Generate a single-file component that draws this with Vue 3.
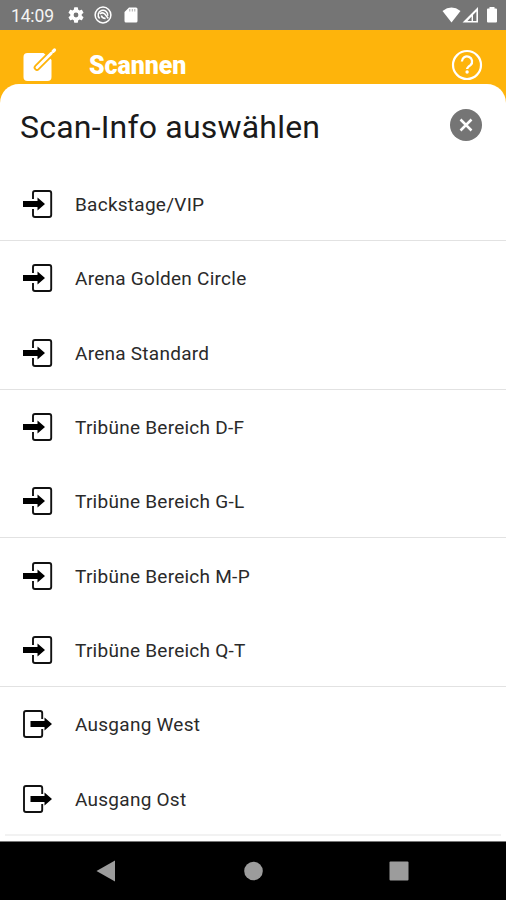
<script setup>
const entries = [
  { label: 'Backstage/VIP', line: true },
  { label: 'Arena Golden Circle' },
  { label: 'Arena Standard', line: true },
  { label: 'Tribüne Bereich D-F' },
  { label: 'Tribüne Bereich G-L', line: true },
  { label: 'Tribüne Bereich M-P' },
  { label: 'Tribüne Bereich Q-T', line: true },
  { label: 'Ausgang West', exit: true },
  { label: 'Ausgang Ost', exit: true },
]
</script>

<template>
  <div class="screen">
    <div class="status">
      <span class="time">14:09</span>
      <svg class="s-gear" width="16" height="16" viewBox="2 2 20 20"><path fill="#fff" fill-rule="evenodd" d="M19.14 12.94c.04-.3.06-.61.06-.94s-.02-.64-.07-.94l2.03-1.58a.49.49 0 0 0 .12-.61l-1.92-3.32a.49.49 0 0 0-.59-.22l-2.39.96a7 7 0 0 0-1.62-.94l-.36-2.54a.48.48 0 0 0-.48-.41h-3.84a.48.48 0 0 0-.47.41l-.36 2.54c-.59.24-1.13.57-1.62.94l-2.39-.96a.49.49 0 0 0-.59.22L2.74 8.87a.48.48 0 0 0 .12.61l2.03 1.58a6 6 0 0 0 0 1.88l-2.03 1.58a.49.49 0 0 0-.12.61l1.92 3.32c.12.22.37.29.59.22l2.39-.96c.5.38 1.03.7 1.62.94l.36 2.54c.05.24.24.41.48.41h3.84c.24 0 .44-.17.47-.41l.36-2.54a7 7 0 0 0 1.62-.94l2.39.96c.22.08.47 0 .59-.22l1.92-3.32a.48.48 0 0 0-.12-.61zM12 15a3 3 0 1 1 0-6 3 3 0 0 1 0 6z"/></svg>
      <svg class="s-round" width="18" height="18" viewBox="0 0 18 18" fill="none" stroke="#fff"><circle cx="9" cy="9" r="7.900" stroke-width="1.500"/><path d="M5.600 12.500A4.800 4.800 0 1 1 13.700 9.800" stroke-width="1.500"/><path d="M5.800 7.800q3-2 5 .3l3.500 4.400M7.300 9.500q.6 2.800 4.300 3" stroke-width="1.500"/></svg>
      <svg class="s-sd" width="14" height="16" viewBox="0 0 14 16"><path fill="#fff" d="M5 .5h7A1.500 1.500 0 0 1 13.500 2v12a1.500 1.500 0 0 1-1.500 1.500H2A1.500 1.500 0 0 1 .5 14V5z"/><path stroke="#aaa" stroke-width="1" d="M5.800 2v2.500M8.300 2v2.500M10.800 2v2.500"/></svg>
      <span class="grow"></span>
      <svg class="s-net" width="56" height="18" viewBox="0 0 56 18"><path fill="#fff" d="M.5 5Q9.500-1.800 18.500 5L9.500 16.500z"/><path fill="#fff" fill-rule="evenodd" d="M36 1v15.500H20.500zM34.400 5.500v9.400H31V9zM29.600 10.500v4.400H25.500z"/><path fill="#fff" d="M47.500 1h5v1.600H54q1 0 1 1v12q0 1-1 1h-8q-1 0-1-1v-12q0-1 1-1h1.500z"/></svg>
    </div>
    <header class="bar">
      <svg width="34" height="35" viewBox="0 0 34 35"><rect x=".5" y="6" width="28" height="28" rx="4" fill="#fff"/><path d="M20.500 6 25 4.500 29.500 5.500V13.500z" fill="#feb40b"/><path d="M14 20.500 29 5.500" stroke="#feb40b" stroke-width="6.600" stroke-linecap="round"/><path d="M14 20.500 28.300 6.200" stroke="#fff" stroke-width="2.900" stroke-linecap="round"/><path d="m30.200 4.300 1.300-1.300" stroke="#fff" stroke-width="3.200" stroke-linecap="round"/></svg>
      <h1>Scannen</h1>
      <span class="grow"></span>
      <svg width="32" height="32" viewBox="0 0 32 32" fill="none" stroke="#fff"><circle cx="16" cy="16" r="14" stroke-width="2.200"/><path d="M10.900 12.500a5.100 5 0 1 1 8.600 3.600q-3.400 2.500-3.400 4" stroke-width="2.300"/><circle cx="16.100" cy="23" r="1.700" fill="#fff" stroke="none"/></svg>
    </header>
    <main class="sheet">
      <div class="head">
        <h2>Scan-Info auswählen</h2>
        <svg width="34" height="34" viewBox="0 0 34 34"><circle cx="17" cy="17" r="16" fill="#757575"/><path d="m11.500 11.500 11 11m0-11-11 11" stroke="#fff" stroke-width="2.500"/></svg>
      </div>
      <ul>
        <li v-for="e in entries" :key="e.label" :class="{ line: e.line }">
          <svg v-if="e.exit" width="32" height="30" viewBox="0 0 32 30"><path d="M20.200 10V4a2 2 0 0 0-2-2H4a2 2 0 0 0-2 2v22a2 2 0 0 0 2 2h14.200a2 2 0 0 0 2-2v-6" fill="none" stroke="#111" stroke-width="1.900"/><path d="M8.500 12h14V8.500l7.500 6.500-7.500 6.500V18h-14z"/></svg>
          <svg v-else width="32" height="30" viewBox="0 0 32 30"><path d="M11 10V4a2 2 0 0 1 2-2h14.200a2 2 0 0 1 2 2v22a2 2 0 0 1-2 2H13a2 2 0 0 1-2-2v-6" fill="none" stroke="#111" stroke-width="1.900"/><path d="M1 12h14.500V8.500l7.500 6.500-7.500 6.500V18H1z"/></svg>
          <span>{{ e.label }}</span>
        </li>
      </ul>
      <div class="end"></div>
    </main>
    <nav class="nav">
      <svg width="506" height="58" viewBox="0 0 506 58" fill="#9c9c9c"><path d="M96.500 29 115 18.500v21z"/><circle cx="253.500" cy="29" r="9.300"/><rect x="389.500" y="19.500" width="19" height="19" rx="1"/></svg>
    </nav>
  </div>
</template>

<style>
body { margin: 0; }
</style>
<style scoped>
.screen { width: 506px; height: 900px; display: flex; flex-direction: column; overflow: hidden; background: #feb40b; font-family: Roboto, sans-serif; color: #1a1a1a; }
svg { display: block; flex: none; }
.grow { flex: 1; }
.status { height: 30px; flex: none; box-sizing: border-box; padding: 0 8px 0 11px; display: flex; align-items: center; background: #757575; }
.time { width: 57px; font-size: 17.500px; letter-spacing: -.15px; line-height: 20px; padding-top: 1px; box-sizing: border-box; color: #f4f4f4; }
.s-round { margin-left: 10px; }
.s-sd { margin-left: 12px; }
.bar { height: 54px; flex: none; box-sizing: border-box; padding: 17px 23px 0; display: flex; align-items: flex-start; }
h1 { margin: 5px 0 0 32px; font-size: 25px; line-height: 28px; font-weight: 900; letter-spacing: -.1px; color: #fff; }
.bar > svg:last-child { margin-top: 2px; }
.sheet { height: 757px; flex: none; border-radius: 19px 19px 0 0; background: #fff; }
.head { height: 83px; box-sizing: border-box; padding: 0 23px 0 20px; display: flex; justify-content: space-between; align-items: center; }
.head svg { margin-top: -2px; }
h2 { margin: 3px 0 0; font-size: 32px; line-height: 40px; font-weight: 400; letter-spacing: .2px; }
ul { margin: 0; padding: 0; list-style: none; }
li { height: 74.300px; box-sizing: border-box; padding: 1px 0 0 22px; display: flex; align-items: center; gap: 21px; font-size: 19px; line-height: 24px; font-weight: 400; letter-spacing: .26px; color: #2a2a2a; border-bottom: 1px solid transparent; }
li.line { border-bottom-color: #e2e2e2; }
li span { padding-top: 2px; }
.end { height: 2px; margin: -2px 5px 0; background: #f2f2f2; }
.nav { height: 59px; flex: none; box-sizing: border-box; border-top: 1px solid #777; background: #000; }
</style>
